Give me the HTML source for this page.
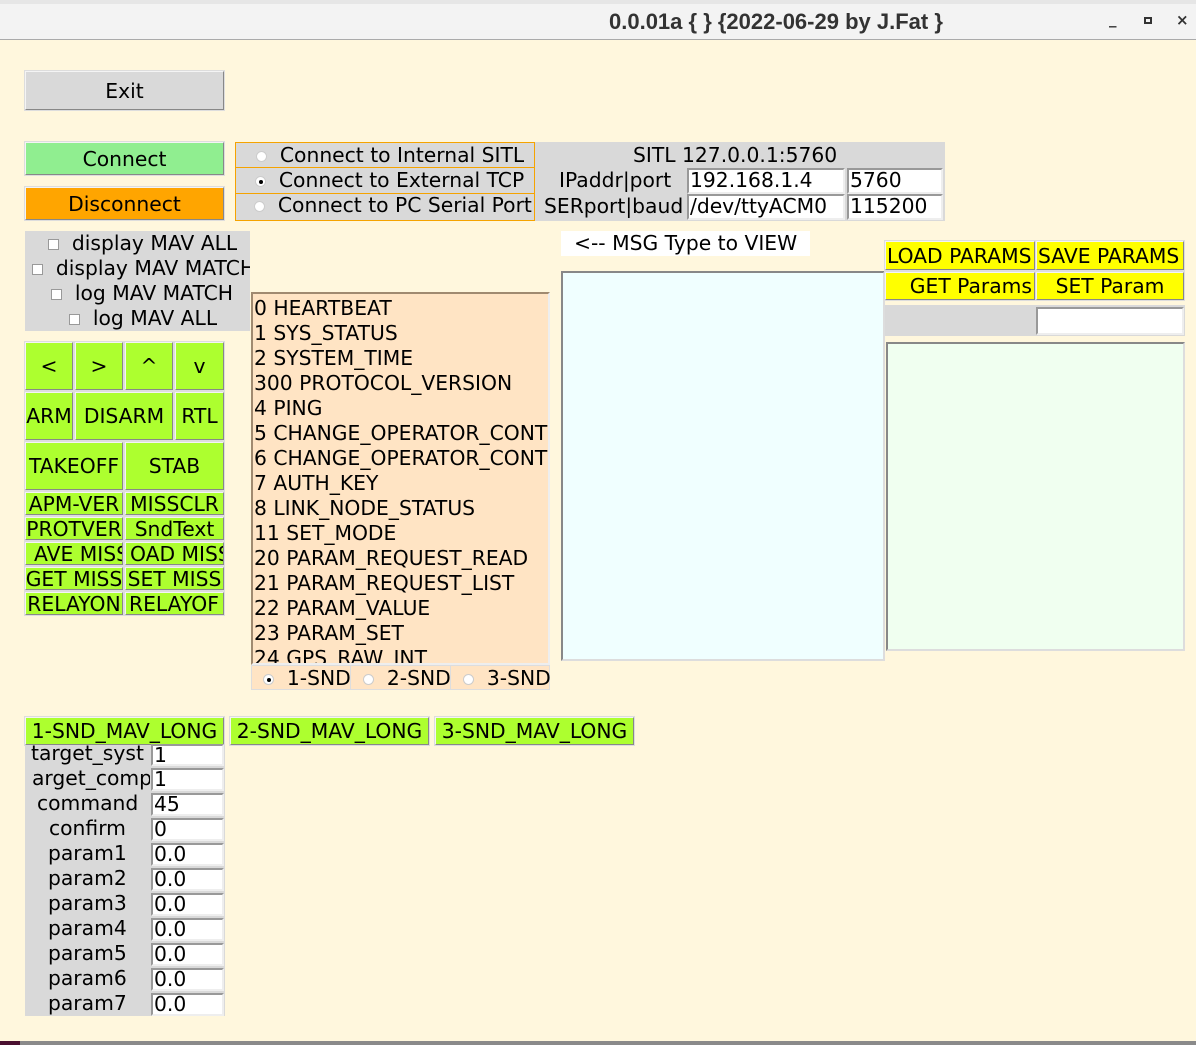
<!DOCTYPE html>
<html><head><meta charset="utf-8"><style>
*{box-sizing:border-box;margin:0;padding:0}
body{width:1196px;height:1045px;background:#fff7dd;font-family:"DejaVu Sans","Liberation Sans",sans-serif;font-size:20.3px;color:#000;position:relative;overflow:hidden}
.a{position:absolute;white-space:nowrap;overflow:hidden}
.btn{display:flex;align-items:center;justify-content:center;border:1px solid;border-color:#f4f4f4 #888 #888 #f4f4f4;outline:1px solid #ddd}
.g{background:#adff2f}
.y{background:#ffff00}
.ent{background:#fff;border:2px solid;border-color:#999 #eee #eee #999;padding-left:1px;line-height:20px}
.rad{display:inline-block;width:11px;height:11px;border-radius:50%;background:#fff;border:1px solid #ccc;vertical-align:middle;position:relative}
.rad.on:after{content:"";position:absolute;left:3px;top:3px;width:4px;height:4px;border-radius:50%;background:#000}
.cb{display:inline-block;width:11px;height:11px;background:#fff;border:1px solid #999;vertical-align:middle}
</style></head><body>
<div class="a" style="left:0;top:0;width:1196px;height:40px;background:#f3f3f3;border-bottom:1px solid #aaa"></div>
<div class="a" style="left:0;top:0;width:1196px;height:4px;background:#e6e6e6"></div>
<div class="a" style="left:609px;top:9px;font-family:'Liberation Sans',sans-serif;font-weight:bold;font-size:22px;color:#333">0.0.01a { } {2022-06-29 by J.Fat }</div>
<div class="a" style="left:1109px;top:10px;font-size:15px;color:#333;font-weight:bold">_</div>
<div class="a" style="left:1144px;top:17px;width:8px;height:7px;border:2px solid #333"></div>
<div class="a" style="left:1176px;top:11px;font-size:15px;color:#333;font-weight:bold">×</div>

<div class="a btn" style="left:25px;top:71px;width:199px;height:39px;background:#d9d9d9">Exit</div>
<div class="a btn" style="left:25px;top:142px;width:199px;height:33px;background:#90ee90">Connect</div>
<div class="a btn" style="left:25px;top:187px;width:199px;height:33px;background:#ffa500">Disconnect</div>

<div class="a" style="left:235px;top:142px;width:300px;height:79px;background:#d9d9d9;border:1px solid #f5a300"></div>
<div class="a" style="left:236px;top:167px;width:298px;height:1px;background:#f5a300"></div>
<div class="a" style="left:236px;top:193px;width:298px;height:1px;background:#f5a300"></div>
<div class="a" style="left:256px;top:143px;line-height:25px"><span class="rad"></span>&nbsp; Connect to Internal SITL</div>
<div class="a" style="left:255px;top:168px;line-height:25px"><span class="rad on"></span>&nbsp; Connect to External TCP</div>
<div class="a" style="left:254px;top:193px;line-height:25px"><span class="rad"></span>&nbsp; Connect to PC Serial Port</div>

<div class="a" style="left:535px;top:142px;width:410px;height:79px;background:#d9d9d9"></div>
<div class="a" style="left:633px;top:143px;line-height:25px">SITL 127.0.0.1:5760</div>
<div class="a" style="left:559px;top:168px;line-height:25px">IPaddr|port</div>
<div class="a" style="left:544px;top:194px;line-height:25px;width:143px">SERport|baud</div>
<div class="a ent" style="left:687px;top:168px;width:158px;height:26px">192.168.1.4</div>
<div class="a ent" style="left:847px;top:168px;width:96px;height:26px">5760</div>
<div class="a ent" style="left:687px;top:194px;width:158px;height:26px">/dev/ttyACM0</div>
<div class="a ent" style="left:847px;top:194px;width:96px;height:26px">115200</div>

<div class="a" style="left:25px;top:231px;width:225px;height:100px;background:#d9d9d9"></div>
<div class="a" style="left:48px;top:231px;line-height:25px"><span class="cb"></span>&nbsp; display MAV ALL</div>
<div class="a" style="left:32px;top:256px;line-height:25px;width:218px"><span class="cb"></span>&nbsp; display MAV MATCH</div>
<div class="a" style="left:51px;top:281px;line-height:25px"><span class="cb"></span>&nbsp; log MAV MATCH</div>
<div class="a" style="left:69px;top:306px;line-height:25px"><span class="cb"></span>&nbsp; log MAV ALL</div>

<div class="a btn g" style="left:25px;top:342px;width:48px;height:48px">&lt;</div>
<div class="a btn g" style="left:75px;top:342px;width:48px;height:48px">&gt;</div>
<div class="a btn g" style="left:125px;top:342px;width:48px;height:48px">^</div>
<div class="a btn g" style="left:175px;top:342px;width:49px;height:48px">v</div>
<div class="a btn g" style="left:25px;top:392px;width:48px;height:48px">ARM</div>
<div class="a btn g" style="left:75px;top:392px;width:98px;height:48px">DISARM</div>
<div class="a btn g" style="left:175px;top:392px;width:49px;height:48px">RTL</div>
<div class="a btn g" style="left:25px;top:442px;width:98px;height:48px">TAKEOFF</div>
<div class="a btn g" style="left:125px;top:442px;width:99px;height:48px">STAB</div>
<div class="a btn g" style="left:25px;top:492px;width:98px;height:23px">APM-VER</div>
<div class="a btn g" style="left:125px;top:492px;width:99px;height:23px">MISSCLR</div>
<div class="a btn g" style="left:25px;top:517px;width:98px;height:23px">PROTVER</div>
<div class="a btn g" style="left:125px;top:517px;width:99px;height:23px">SndText</div>
<div class="a btn g" style="left:25px;top:542px;width:98px;height:23px;justify-content:flex-start;padding-left:8px">AVE MISS</div>
<div class="a btn g" style="left:125px;top:542px;width:99px;height:23px;justify-content:flex-start;padding-left:4px">OAD MISS</div>
<div class="a btn g" style="left:25px;top:567px;width:98px;height:23px">GET MISS</div>
<div class="a btn g" style="left:125px;top:567px;width:99px;height:23px">SET MISS</div>
<div class="a btn g" style="left:25px;top:592px;width:98px;height:23px">RELAYON</div>
<div class="a btn g" style="left:125px;top:592px;width:99px;height:23px;justify-content:flex-start;padding-left:3px">RELAYOF</div>

<div class="a" style="left:251px;top:292px;width:299px;height:373px;background:#ffe4c4;border:2px solid;border-color:#a08a70 #eee #eee #a08a70;padding-left:1px;padding-top:2px;line-height:25px">0 HEARTBEAT<br>1 SYS_STATUS<br>2 SYSTEM_TIME<br>300 PROTOCOL_VERSION<br>4 PING<br>5 CHANGE_OPERATOR_CONTROL<br>6 CHANGE_OPERATOR_CONTROL_ACK<br>7 AUTH_KEY<br>8 LINK_NODE_STATUS<br>11 SET_MODE<br>20 PARAM_REQUEST_READ<br>21 PARAM_REQUEST_LIST<br>22 PARAM_VALUE<br>23 PARAM_SET<br>24 GPS_RAW_INT</div>
<div class="a" style="left:251px;top:665px;width:299px;height:25px;background:#ffe4c4;border:1px solid #ddd"></div>
<div class="a" style="left:350px;top:666px;width:1px;height:23px;background:#ddd"></div>
<div class="a" style="left:450px;top:666px;width:1px;height:23px;background:#ddd"></div>
<div class="a" style="left:263px;top:666px;line-height:25px;width:87px"><span class="rad on"></span>&nbsp; 1-SND</div>
<div class="a" style="left:363px;top:666px;line-height:25px;width:87px"><span class="rad"></span>&nbsp; 2-SND</div>
<div class="a" style="left:463px;top:666px;line-height:25px;width:87px"><span class="rad"></span>&nbsp; 3-SND</div>

<div class="a" style="left:561px;top:231px;width:249px;height:25px;background:#fff;line-height:25px;padding-left:13px">&lt;-- MSG Type to VIEW</div>
<div class="a" style="left:561px;top:271px;width:324px;height:390px;background:#f0ffff;border:2px solid;border-color:#888 #ddd #ddd #888"></div>

<div class="a btn y" style="left:885px;top:241px;width:150px;height:29px;justify-content:flex-start;padding-left:1px">LOAD PARAMS</div>
<div class="a btn y" style="left:1036px;top:241px;width:148px;height:29px;justify-content:flex-start;padding-left:1px">SAVE PARAMS</div>
<div class="a btn y" style="left:885px;top:272px;width:150px;height:28px;justify-content:flex-end;padding-right:2px">GET Params</div>
<div class="a btn y" style="left:1036px;top:272px;width:148px;height:28px">SET Param</div>
<div class="a" style="left:885px;top:305px;width:300px;height:31px;background:#d9d9d9"></div>
<div class="a ent" style="left:1036px;top:307px;width:148px;height:28px"></div>
<div class="a" style="left:886px;top:342px;width:299px;height:309px;background:#f0fff0;border:2px solid;border-color:#888 #ddd #ddd #888"></div>

<div class="a btn g" style="left:25px;top:717px;width:199px;height:28px">1-SND_MAV_LONG</div>
<div class="a btn g" style="left:230px;top:717px;width:199px;height:28px">2-SND_MAV_LONG</div>
<div class="a btn g" style="left:435px;top:717px;width:199px;height:28px">3-SND_MAV_LONG</div>
<div class="a" style="left:25px;top:745px;width:200px;height:271px;background:#d9d9d9"></div>
<div class="a" style="left:31px;top:741px;line-height:25px;width:118px">target_syst</div>
<div class="a" style="left:32px;top:766px;line-height:25px;width:118px">arget_comp</div>
<div class="a" style="left:37px;top:791px;line-height:25px">command</div>
<div class="a" style="left:49px;top:816px;line-height:25px">confirm</div>
<div class="a" style="left:48px;top:841px;line-height:25px">param1</div>
<div class="a" style="left:48px;top:866px;line-height:25px">param2</div>
<div class="a" style="left:48px;top:891px;line-height:25px">param3</div>
<div class="a" style="left:48px;top:916px;line-height:25px">param4</div>
<div class="a" style="left:48px;top:941px;line-height:25px">param5</div>
<div class="a" style="left:48px;top:966px;line-height:25px">param6</div>
<div class="a" style="left:48px;top:991px;line-height:25px">param7</div>
<div class="a ent" style="left:151px;top:744px;width:73px;height:22px;line-height:18px">1</div>
<div class="a ent" style="left:151px;top:768px;width:73px;height:23px;line-height:19px">1</div>
<div class="a ent" style="left:151px;top:793px;width:73px;height:23px;line-height:19px">45</div>
<div class="a ent" style="left:151px;top:818px;width:73px;height:23px;line-height:19px">0</div>
<div class="a ent" style="left:151px;top:843px;width:73px;height:23px;line-height:19px">0.0</div>
<div class="a ent" style="left:151px;top:868px;width:73px;height:23px;line-height:19px">0.0</div>
<div class="a ent" style="left:151px;top:893px;width:73px;height:23px;line-height:19px">0.0</div>
<div class="a ent" style="left:151px;top:918px;width:73px;height:23px;line-height:19px">0.0</div>
<div class="a ent" style="left:151px;top:943px;width:73px;height:23px;line-height:19px">0.0</div>
<div class="a ent" style="left:151px;top:968px;width:73px;height:23px;line-height:19px">0.0</div>
<div class="a ent" style="left:151px;top:993px;width:73px;height:23px;line-height:19px">0.0</div>

<div class="a" style="left:0;top:1041px;width:1196px;height:4px;background:#8a8a8a"></div>
<div class="a" style="left:0;top:1041px;width:20px;height:4px;background:#4a1030"></div>
</body></html>
